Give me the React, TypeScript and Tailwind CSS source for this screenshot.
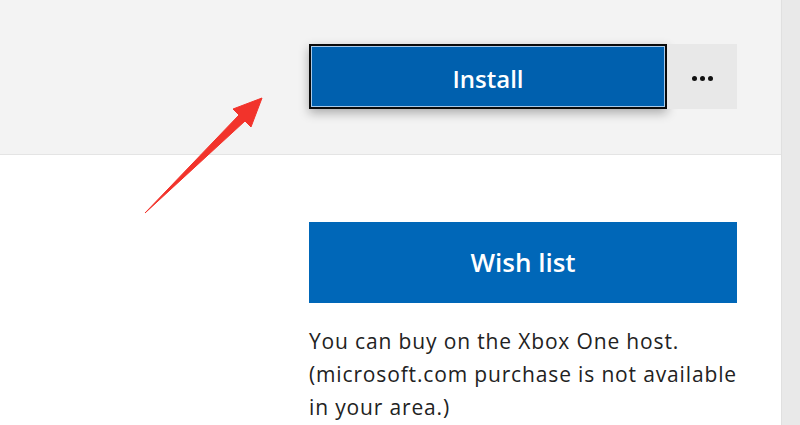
export default function App() {
  return (
    <div className="relative flex h-[425px] w-[800px] overflow-hidden bg-white font-['Open_Sans',sans-serif]">
      <div className="flex flex-1 flex-col">
        <div className="h-[155px] border-b border-[#e4e4e4] bg-[#f3f3f3] pl-[309px] pt-[44px]">
          <div className="flex h-[65px] w-[428px]">
            <button className="flex w-[358px] items-center justify-center border-2 border-[#0a0a0a] bg-[#0060ae] pt-[5px] text-[24px] font-semibold text-white shadow-[inset_0_0_0_1px_#a9cbea,0_4px_10px_rgba(0,0,0,0.3)]">
              Install
            </button>
            <button className="flex flex-1 items-center justify-center gap-[3px] bg-[#e8e8e8] pt-[3px]">
              <span className="h-[5px] w-[5px] rounded-full bg-[#111]" />
              <span className="h-[5px] w-[5px] rounded-full bg-[#111]" />
              <span className="h-[5px] w-[5px] rounded-full bg-[#111]" />
            </button>
          </div>
        </div>
        <div className="flex-1 pl-[309px] pt-[67px]">
          <button className="flex h-[81px] w-[428px] items-center justify-center bg-[#0067b8] text-[26px] font-semibold text-white">
            Wish list
          </button>
          <p className="mt-[22px] w-[470px] text-[21px] leading-[33px] tracking-[0.85px] text-[#222]">
            You can buy on the Xbox One host.
            <br />
            (microsoft.com purchase is not available
            <br />
            in your area.)
          </p>
        </div>
      </div>
      <div className="w-[19px] border-l border-[#e0e0e0] bg-[#e9e9e9]" />
      <svg
        className="absolute left-0 top-0"
        width="800"
        height="425"
        viewBox="0 0 800 425"
      >
        <polygon
          points="145,213 239,115 233,109 262,98 251,127 245,121"
          fill="#f2332b"
          stroke="#f2332b"
          strokeWidth="1"
          strokeLinejoin="round"
        />
      </svg>
    </div>
  );
}
